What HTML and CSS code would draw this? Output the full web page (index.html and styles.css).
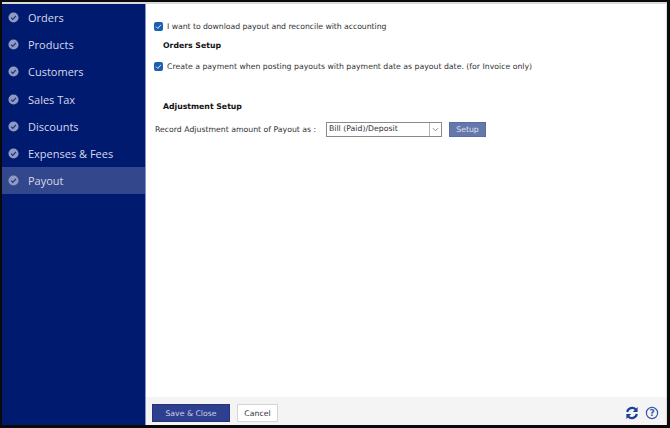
FILE: index.html
```html
<!DOCTYPE html>
<html lang="en">
<head>
<meta charset="utf-8">
<title>Payout settings</title>
<link rel="stylesheet" href="styles.css">
</head>
<body>
<div class="frame">
  <nav class="sidebar">
    <a class="nav-item"><svg class="tick" viewBox="0 0 12 12"><circle cx="6" cy="6" r="5.5"/><path d="M3.4 6.2 5.2 8 8.7 4.3"/></svg>Orders</a>
    <a class="nav-item"><svg class="tick" viewBox="0 0 12 12"><circle cx="6" cy="6" r="5.5"/><path d="M3.4 6.2 5.2 8 8.7 4.3"/></svg>Products</a>
    <a class="nav-item"><svg class="tick" viewBox="0 0 12 12"><circle cx="6" cy="6" r="5.5"/><path d="M3.4 6.2 5.2 8 8.7 4.3"/></svg>Customers</a>
    <a class="nav-item"><svg class="tick" viewBox="0 0 12 12"><circle cx="6" cy="6" r="5.5"/><path d="M3.4 6.2 5.2 8 8.7 4.3"/></svg>Sales Tax</a>
    <a class="nav-item"><svg class="tick" viewBox="0 0 12 12"><circle cx="6" cy="6" r="5.5"/><path d="M3.4 6.2 5.2 8 8.7 4.3"/></svg>Discounts</a>
    <a class="nav-item"><svg class="tick" viewBox="0 0 12 12"><circle cx="6" cy="6" r="5.5"/><path d="M3.4 6.2 5.2 8 8.7 4.3"/></svg>Expenses &amp; Fees</a>
    <a class="nav-item active"><svg class="tick" viewBox="0 0 12 12"><circle cx="6" cy="6" r="5.5"/><path d="M3.4 6.2 5.2 8 8.7 4.3"/></svg>Payout</a>
  </nav>
  <div class="panel">
    <main class="content">
      <div class="check-row first"><span class="checkbox"><svg viewBox="0 0 9 9"><path d="M2 4.6 3.8 6.4 7 2.8"/></svg></span>I want to download payout and reconcile with accounting</div>
      <h2 class="section-title orders">Orders Setup</h2>
      <div class="check-row second"><span class="checkbox"><svg viewBox="0 0 9 9"><path d="M2 4.6 3.8 6.4 7 2.8"/></svg></span>Create a payment when posting payouts with payment date as payout date. (for Invoice only)</div>
      <h2 class="section-title adjustment">Adjustment Setup</h2>
      <div class="field-row">
        <span class="field-label">Record Adjustment amount of Payout as :</span>
        <div class="select"><span class="select-value">Bill (Paid)/Deposit</span><span class="select-arrow"><svg viewBox="0 0 8 5"><path d="M1 1 4 4 7 1"/></svg></span></div>
        <button class="btn-setup">Setup</button>
      </div>
    </main>
    <footer class="footer">
      <button class="btn-save">Save &amp; Close</button>
      <button class="btn-cancel">Cancel</button>
      <div class="footer-icons">
        <svg class="icon" viewBox="0 0 14 14"><path class="refresh" d="M2.2 6A5 5 0 0 1 10.8 3.6"/><path class="fill" d="M12.6 1 12.6 6 7.8 6Z"/><path class="refresh" d="M11.8 8A5 5 0 0 1 3.2 10.4"/><path class="fill" d="M1.4 13 1.4 8 6.2 8Z"/></svg>
        <svg class="icon" viewBox="0 0 14 14"><circle class="ring" cx="7" cy="7" r="5.6"/><text class="q" x="7" y="10.2" text-anchor="middle">?</text></svg>
      </div>
    </footer>
  </div>
</div>
</body>
</html>
```

FILE: styles.css
```css
html, body {
  margin: 0;
  height: 100%;
  background: #000;
}
.frame {
  box-sizing: border-box;
  width: 670px;
  height: 428px;
  display: flex;
  background: #fff;
  border-style: solid;
  border-color: #0a0a0a;
  border-width: 2px 3px 3px 2px;
  box-shadow: inset 0 2px 0 #d9d9d9;
  overflow: hidden;
}
.sidebar {
  width: 143px;
  flex: none;
  margin-top: 2px;
  background: #001a70;
  font-family: "Open Sans", sans-serif;
  font-size: 11px;
  color: #d5d9ea;
}
.nav-item {
  display: flex;
  align-items: center;
  height: 27.17px;
  padding-left: 6px;
  gap: 9px;
}
.nav-item.active {
  background: #33478c;
}
.tick {
  width: 11px;
  height: 11px;
  flex: none;
}
.tick circle {
  fill: #8f9ac3;
}
.tick path {
  fill: none;
  stroke: #1e2f80;
  stroke-width: 1.3;
}
.panel {
  flex: 1;
  display: flex;
  flex-direction: column;
  margin-top: 2px;
  border-left: 1px solid #8795c8;
  border-right: 1px solid #dcdcdc;
  min-width: 0;
  font-family: "DejaVu Sans", sans-serif;
  font-size: 7.75px;
  color: #333;
}
.content {
  flex: 1;
  padding-left: 8px;
}
.check-row {
  display: flex;
  align-items: center;
  gap: 4px;
  height: 12px;
}
.check-row.first {
  margin-top: 16px;
  letter-spacing: -.05px;
}
.check-row.second {
  margin-top: 8px;
}
.checkbox {
  width: 9px;
  height: 9px;
  border-radius: 2px;
  background: #1a5fb0;
  display: flex;
  flex: none;
}
.checkbox svg {
  width: 9px;
  height: 9px;
}
.checkbox path {
  fill: none;
  stroke: #dfe8f5;
  stroke-width: 1;
}
.section-title {
  margin: 0;
  font-size: 7.75px;
  font-weight: bold;
  color: #111;
  line-height: 12px;
  padding-left: 9px;
}
.section-title.orders {
  margin-top: 8px;
}
.section-title.adjustment {
  margin-top: 29px;
}
.field-row {
  display: flex;
  align-items: center;
  margin-top: 9px;
  height: 15px;
}
.field-label {
  width: 171px;
  padding-left: 1px;
  flex: none;
}
.select {
  box-sizing: border-box;
  width: 116px;
  height: 15px;
  display: flex;
  border: 1px solid #8a8a8a;
  background: #fff;
}
.select-value {
  flex: 1;
  padding-left: 2px;
  line-height: 11px;
}
.select-arrow {
  width: 11px;
  border-left: 1px solid #b5b5b5;
  display: flex;
  align-items: center;
  justify-content: center;
}
.select-arrow svg {
  width: 7px;
  height: 5px;
}
.select-arrow path {
  fill: none;
  stroke: #777;
}
.btn-setup {
  width: 37px;
  height: 15px;
  margin-left: 7px;
  padding: 0;
  border: 1px solid #5a6ca4;
  background: #6677ab;
  color: #dde2f0;
  font: 7.75px "DejaVu Sans", sans-serif;
}
.footer {
  height: 24px;
  flex: none;
  background: #f4f4f4;
  display: flex;
  align-items: center;
  padding: 4px 7px 0 6px;
  gap: 7px;
}
.btn-save {
  width: 78px;
  height: 18px;
  padding: 0;
  background: #2f3f8f;
  border: 1px solid #25337a;
  color: #c9cfe6;
  font: 7.75px "DejaVu Sans", sans-serif;
}
.btn-cancel {
  width: 41px;
  height: 18px;
  padding: 0;
  background: #fff;
  border: 1px solid #d5d5d5;
  color: #333;
  font: 7.75px "DejaVu Sans", sans-serif;
}
.footer-icons {
  margin-left: auto;
  display: flex;
  gap: 6px;
  align-items: center;
}
.icon {
  width: 14px;
  height: 14px;
}
.refresh {
  fill: none;
  stroke: #1d3f95;
  stroke-width: 2.2;
}
.fill {
  fill: #1d3f95;
}
.ring {
  fill: none;
  stroke: #3c58a5;
  stroke-width: 1.2;
}
.q {
  font: bold 9px "DejaVu Sans", sans-serif;
  fill: #3c58a5;
}
```
